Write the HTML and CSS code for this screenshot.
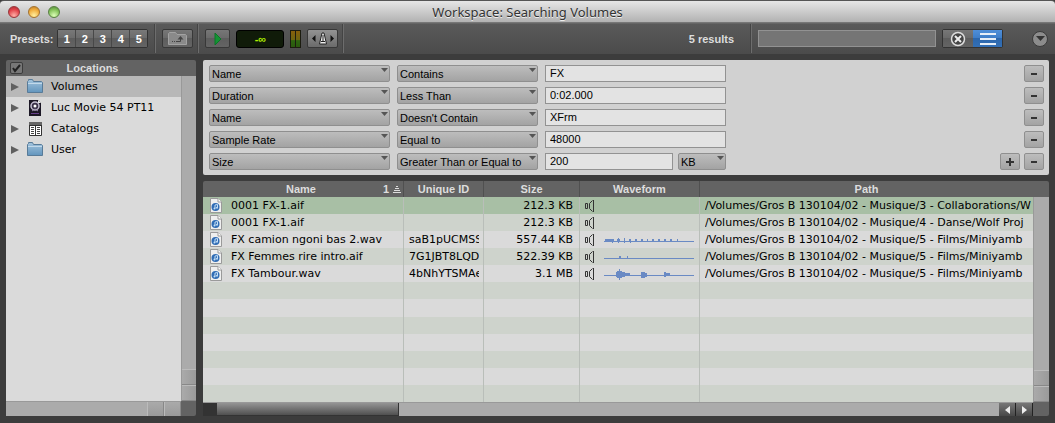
FILE: index.html
```
<!DOCTYPE html>
<html lang="en">
<head>
  <meta charset="UTF-8" />
  <meta name="viewport" content="width=device-width, initial-scale=1" />
  <title>Workspace: Searching Volumes</title>
  <link rel="stylesheet" href="styles.css">
</head>
<body>

  <!-- Shared icons -->
  <svg class="sprite" aria-hidden="true">
    <defs>
      <linearGradient id="folder-fill" x1="0" y1="0" x2="0" y2="1">
        <stop offset="0" stop-color="#a3c4dd" />
        <stop offset="1" stop-color="#6295bd" />
      </linearGradient>
    </defs>
    <symbol id="folder" viewBox="0 0 16 15">
      <path d="M.5 13.500V2.500L1.500 1.500V.5H5.500L6.500 2.500H14.500L15.500 3.500V13.500Z" fill="url(#folder-fill)" stroke="#587b98" />
      <path d="M1 4.500H15" stroke="#c2d9ea" />
    </symbol>
    <symbol id="audio-file" viewBox="0 0 12 15">
      <path d="M.5 .5H8L11.5 4V14.5H.5Z" fill="#efefef" stroke="#9a9a9a" />
      <path d="M8 .5V4H11.5" fill="#fff" stroke="#9a9a9a" />
      <circle cx="5.5" cy="9" r="4" fill="#2f6cb5" />
      <path d="M5 10.5V7L7.5 6.5V9.5" fill="none" stroke="#c4def5" />
      <circle cx="4.5" cy="10.5" r="1" fill="#c4def5" />
      <circle cx="7" cy="9.7" r="1" fill="#c4def5" />
    </symbol>
    <symbol id="speaker" viewBox="0 0 10 14">
      <path d="M.5 4.500H2.500V9.500H.5ZM8.500 1V13M7.500 1.500L4.500 4.500V9.500L7.500 12.500" fill="none" stroke="#333" />
    </symbol>
  </svg>

  <header class="titlebar">
    <div class="lights">
      <button class="light red" aria-label="Close"></button>
      <button class="light yellow" aria-label="Minimize"></button>
      <button class="light green" aria-label="Zoom"></button>
    </div>
    <h1>Workspace: Searching Volumes</h1>
  </header>

  <!-- Toolbar -->
  <div class="toolbar">
    <div class="group presets">
      <span>Presets:</span>
      <div class="preset-buttons">
        <button>1</button><button>2</button><button>3</button><button>4</button><button>5</button>
      </div>
    </div>
    <div class="group">
      <button class="tool wide" aria-label="Up one folder">
        <svg width="19" height="14" viewBox="0 0 19 14">
          <path d="M.5 12.5V1.5L1.5 .5H7.5L9 2.5H17.5L18.5 3.5V12.5Z" fill="#8a8a8a" stroke="#a2a2a2" />
          <path d="M4 9.500H5M6 9.500H7M8 9.500H12.500V6" fill="none" stroke="#444" />
          <path d="M9.500 7.500L12.500 4L15.500 7.500Z" fill="#444" />
        </svg>
      </button>
    </div>
    <div class="group preview">
      <button class="tool" aria-label="Play">
        <svg width="8" height="12" viewBox="0 0 8 12"><path d="M1 0L7 6L1 12Z" fill="#149334" stroke="#0b7627" /></svg>
      </button>
      <output class="level">-∞</output>
      <div class="meter"><i></i><i></i></div>
      <button class="tool wide metronome" aria-label="Metronome">
        <svg width="22" height="13" viewBox="0 0 22 13">
          <path d="M3.500 3V10L0 6.500ZM18.500 3V10L22 6.500Z" fill="#111" />
          <path d="M10 1H12L14.500 12H7.500Z" fill="#eee" stroke="#222" />
          <path d="M11 3V9M9 9.500H13" stroke="#222" />
        </svg>
      </button>
    </div>
    <div class="group results"><span>5 results</span></div>
    <div class="search">
      <input type="text" aria-label="Search">
      <div class="toggle">
        <button aria-label="Cancel search">
          <svg width="16" height="16" viewBox="0 0 16 16">
            <circle cx="8" cy="8" r="6.500" fill="#444" stroke="#ddd" stroke-width="1.500" />
            <path d="M5 5L11 11M11 5L5 11" stroke="#eee" stroke-width="2" />
          </svg>
        </button>
        <button class="on" aria-label="Advanced search">
          <svg width="16" height="12" viewBox="0 0 16 12"><path d="M0 1H16M0 6H16M0 11H16" stroke="#e6eef7" stroke-width="2" /></svg>
        </button>
      </div>
      <button class="menu" aria-label="Workspace menu">
        <svg width="9" height="5" viewBox="0 0 9 5"><path d="M0 0H9L4.500 5Z" fill="#333" /></svg>
      </button>
    </div>
  </div>

  <main>
    <!-- Locations -->
    <aside class="panel locations">
      <div class="locations-head">
        <label class="check"><input type="checkbox" checked aria-label="Select all locations"></label>
        <h2>Locations</h2>
      </div>
      <ul>
        <li class="selected"><i class="expand"></i><svg width="16" height="15"><use href="#folder" /></svg>Volumes</li>
        <li><i class="expand"></i>
          <svg width="16" height="16" viewBox="0 0 16 16">
            <path d="M2 0H11L14 3V16H2Z" fill="#1c1725" />
            <path d="M11 0V3H14Z" fill="#eee" />
            <circle cx="8" cy="6" r="4" fill="#393047" stroke="#c5bfd2" stroke-width="1.500" />
            <circle cx="8" cy="6" r="1.500" fill="#fff" />
            <path d="M5 11L8 9L11 11" fill="none" stroke="#9b8fad" />
            <path d="M4 13.500H12" stroke="#67408a" />
          </svg>Luc Movie 54 PT11</li>
        <li><i class="expand"></i>
          <svg width="16" height="16" viewBox="0 0 16 16">
            <path d="M2.500 1.500H14.500V14.500H2.500Z" fill="#fff" stroke="#333" />
            <path d="M2 1H15V4H2Z" fill="#666" />
            <path d="M2 4.500H15M8.500 4V15" stroke="#333" />
            <path d="M4 6.500H7M4 8.500H7M4 10.500H7M4 12.500H7M10 6.500H13M10 8.500H13M10 10.500H13M10 12.500H13" stroke="#444" />
          </svg>Catalogs</li>
        <li><i class="expand"></i><svg width="16" height="15"><use href="#folder" /></svg>User</li>
      </ul>
      <div class="vscroll"><i></i><i></i></div>
      <div class="hscroll"><i></i><i></i></div>
    </aside>

    <div class="content">
      <!-- Search criteria -->
      <form class="panel criteria">
        <div class="rule">
          <select aria-label="Field 1"><option>Name</option></select>
          <select class="op" aria-label="Condition 1"><option>Contains</option></select>
          <input type="text" value="FX" aria-label="Value 1">
          <div class="actions"><button type="button" class="remove" aria-label="Remove"></button></div>
        </div>
        <div class="rule">
          <select aria-label="Field 2"><option>Duration</option></select>
          <select class="op" aria-label="Condition 2"><option>Less Than</option></select>
          <input type="text" value="0:02.000" aria-label="Value 2">
          <div class="actions"><button type="button" class="remove" aria-label="Remove"></button></div>
        </div>
        <div class="rule">
          <select aria-label="Field 3"><option>Name</option></select>
          <select class="op" aria-label="Condition 3"><option>Doesn't Contain</option></select>
          <input type="text" value="XFrm" aria-label="Value 3">
          <div class="actions"><button type="button" class="remove" aria-label="Remove"></button></div>
        </div>
        <div class="rule">
          <select aria-label="Field 4"><option>Sample Rate</option></select>
          <select class="op" aria-label="Condition 4"><option>Equal to</option></select>
          <input type="text" value="48000" aria-label="Value 4">
          <div class="actions"><button type="button" class="remove" aria-label="Remove"></button></div>
        </div>
        <div class="rule">
          <select aria-label="Field 5"><option>Size</option></select>
          <select class="op" aria-label="Condition 5"><option>Greater Than or Equal to</option></select>
          <div class="with-unit">
            <input type="text" value="200" aria-label="Value 5">
            <select class="unit" aria-label="Unit"><option>KB</option></select>
          </div>
          <div class="actions">
            <button type="button" class="add" aria-label="Add"></button>
            <button type="button" class="remove" aria-label="Remove"></button>
          </div>
        </div>
      </form>

      <!-- Results -->
      <section class="panel files">
        <table>
          <colgroup>
            <col class="c-name"><col class="c-id"><col class="c-size"><col class="c-wave"><col>
          </colgroup>
          <thead>
            <tr>
              <th><div class="sort"><span>Name</span><span>1</span>
                <svg width="8" height="8" viewBox="0 0 8 8"><path d="M3 1.500H5M2 3.500H6M1 5.500H7M0 7.500H8" stroke="#ddd" /></svg></div></th>
              <th>Unique ID</th>
              <th>Size</th>
              <th>Waveform</th>
              <th>Path</th>
            </tr>
          </thead>
          <tbody>
            <tr class="selected">
              <td><div class="file"><svg width="12" height="15"><use href="#audio-file" /></svg>0001 FX-1.aif</div></td>
              <td></td>
              <td class="size">212.3 KB</td>
              <td><div class="wave"><svg width="10" height="14"><use href="#speaker" /></svg></div></td>
              <td><div class="clip">/Volumes/Gros B 130104/02 - Musique/3 - Collaborations/W</div></td>
            </tr>
            <tr>
              <td><div class="file"><svg width="12" height="15"><use href="#audio-file" /></svg>0001 FX-1.aif</div></td>
              <td></td>
              <td class="size">212.3 KB</td>
              <td><div class="wave"><svg width="10" height="14"><use href="#speaker" /></svg></div></td>
              <td><div class="clip">/Volumes/Gros B 130104/02 - Musique/4 - Danse/Wolf Proj</div></td>
            </tr>
            <tr>
              <td><div class="file"><svg width="12" height="15"><use href="#audio-file" /></svg>FX camion ngoni bas 2.wav</div></td>
              <td><div class="clip">saB1pUCMSSj</div></td>
              <td class="size">557.44 KB</td>
              <td><div class="wave"><svg width="10" height="14"><use href="#speaker" /></svg>
                <svg width="90" height="16" viewBox="0 0 90 16" fill="#6a8ac4"><path d="M0 9H90V10H0ZM1 7H10V10H1ZM8 8H9V11H8ZM13 7H16V10H13ZM14 6H15V11H14ZM20 6H21V11H20ZM25 7H27V10H25ZM26 9H27V11H26ZM31 7H33V9H31ZM37 7H39V9H37ZM43 7H44V9H43ZM48 7H50V9H48ZM54 7H56V9H54ZM60 7H62V9H60ZM66 7H68V9H66ZM73 7H74V9H73Z" /></svg></div></td>
              <td><div class="clip">/Volumes/Gros B 130104/02 - Musique/5 - Films/Miniyamb</div></td>
            </tr>
            <tr>
              <td><div class="file"><svg width="12" height="15"><use href="#audio-file" /></svg>FX Femmes rire intro.aif</div></td>
              <td><div class="clip">7G1JBT8LQDI</div></td>
              <td class="size">522.39 KB</td>
              <td><div class="wave"><svg width="10" height="14"><use href="#speaker" /></svg>
                <svg width="90" height="16" viewBox="0 0 90 16" fill="#6a8ac4"><path d="M0 9H90V10H0ZM15 7H17V10H15ZM23 7H24V10H23Z" /></svg></div></td>
              <td><div class="clip">/Volumes/Gros B 130104/02 - Musique/5 - Films/Miniyamb</div></td>
            </tr>
            <tr>
              <td><div class="file"><svg width="12" height="15"><use href="#audio-file" /></svg>FX Tambour.wav</div></td>
              <td><div class="clip">4bNhYTSMAe</div></td>
              <td class="size">3.1 MB</td>
              <td><div class="wave"><svg width="10" height="14"><use href="#speaker" /></svg>
                <svg width="90" height="16" viewBox="0 0 90 16" fill="#6a8ac4"><path d="M0 9H90V10H0ZM12 6H13V11H12ZM13 5H15V12H13ZM15 3H16V14H15ZM16 5H18V12H16ZM18 6H21V11H18ZM21 7H26V10H21ZM37 6H41V12H37ZM41 7H43V11H41ZM60 6H62V11H60ZM62 7H66V10H62Z" /></svg></div></td>
              <td><div class="clip">/Volumes/Gros B 130104/02 - Musique/5 - Films/Miniyamb</div></td>
            </tr>
            <tr><td></td><td></td><td></td><td></td><td></td></tr>
            <tr><td></td><td></td><td></td><td></td><td></td></tr>
            <tr><td></td><td></td><td></td><td></td><td></td></tr>
            <tr><td></td><td></td><td></td><td></td><td></td></tr>
            <tr><td></td><td></td><td></td><td></td><td></td></tr>
            <tr><td></td><td></td><td></td><td></td><td></td></tr>
            <tr><td></td><td></td><td></td><td></td><td></td></tr>
          </tbody>
        </table>
        <div class="vscroll"><i></i><i></i></div>
        <div class="hscroll">
          <span class="corner"></span>
          <span class="thumb"></span>
          <button aria-label="Scroll left"><svg width="5" height="8" viewBox="0 0 5 8"><path d="M5 0V8L0 4Z" fill="#eee" /></svg></button>
          <button aria-label="Scroll right"><svg width="5" height="8" viewBox="0 0 5 8"><path d="M0 0V8L5 4Z" fill="#eee" /></svg></button>
        </div>
      </section>
    </div>
  </main>

</body>
</html>
```
FILE: styles.css
```
:root {
  --frame: #3c3c3c;
  --bar: #636363;
  --pane: #dadada;
  --track: #ababab;
  --ui: "Liberation Sans", Arial, sans-serif;
  --list: "DejaVu Sans", "Lucida Grande", sans-serif;
}

* {
  box-sizing: border-box;
}

body {
  margin: 0;
  min-height: 100vh;
  display: flex;
  flex-direction: column;
  background: var(--frame);
  font-family: var(--ui);
  font-size: 11px;
  color: #000;
}

button, input, select {
  font: inherit;
  margin: 0;
  padding: 0;
  border: 0;
}

button {
  display: flex;
  align-items: center;
  justify-content: center;
}

h1, h2, ul {
  margin: 0;
  padding: 0;
  list-style: none;
}

svg {
  flex: none;
  display: block;
}

.sprite {
  position: absolute;
  width: 0;
  height: 0;
}

/* Title bar */
.titlebar {
  display: grid;
  grid-template-columns: 1fr auto 1fr;
  align-items: center;
  height: 23px;
  padding: 1px 8px 0;
  background: linear-gradient(#e6e6e6, #b2b2b2);
  border-top: 1px solid #555;
  border-bottom: 1px solid #777;
  border-radius: 4px 4px 0 0;
}

.titlebar h1 {
  font: 13px/20px "Noto Sans", sans-serif;
  color: #333;
  text-shadow: 0 1px 0 #eee;
}

.lights {
  display: flex;
  gap: 8px;
}

.light {
  width: 12px;
  height: 12px;
  border-radius: 50%;
}

.red {
  background: radial-gradient(circle at 50% 85%, #ffb0a8, #e2434a 60%, #a52a30);
  border: 1px solid #97363a;
}

.yellow {
  background: radial-gradient(circle at 50% 85%, #fff0a0, #f0ac3c 60%, #b87a24);
  border: 1px solid #a3712e;
}

.green {
  background: radial-gradient(circle at 50% 85%, #dcffb8, #84c259 60%, #52863a);
  border: 1px solid #587f43;
}

/* Toolbar */
.toolbar {
  display: flex;
  height: 31px;
  padding-bottom: 1px;
  background: linear-gradient(#5a5a5a, #4b4b4b);
  border-top: 1px solid #666;
  color: #ddd;
  font-weight: bold;
}

.group {
  display: flex;
  align-items: center;
  gap: 6px;
  padding: 0 5px 0 6px;
  border-right: 1px solid #6d6d6d;
  box-shadow: inset -1px 0 #444;
}

.presets {
  gap: 4px;
  padding: 0 7px 0 10px;
}

.preset-buttons, .toggle {
  display: flex;
  border: 1px solid #333;
  border-radius: 2px;
}

.preset-buttons button {
  width: 18px;
  height: 17px;
  background: linear-gradient(#787878, #6b6b6b 50%, #5d5d5d 50%, #646464);
  color: #fff;
  border-right: 1px solid #484848;
}

.preset-buttons button:last-child {
  width: 17px;
  border-right: 0;
}

.tool {
  width: 25px;
  height: 19px;
  background: linear-gradient(#777, #696969 50%, #5d5d5d 50%, #646464);
  border: 1px solid #383838;
  border-radius: 2px;
}

.wide {
  width: 31px;
}

.metronome {
  background: linear-gradient(#939393, #6b6b6b);
}

.level {
  width: 48px;
  height: 18px;
  line-height: 16px;
  text-align: center;
  color: #aef000;
  background: #101b09;
  border: 1px solid #000;
  border-radius: 3px;
}

.meter {
  display: flex;
  gap: 1px;
  padding: 1px;
  background: #1c1c10;
}

.meter i {
  width: 4px;
  height: 16px;
  background: linear-gradient(#875f0c, #6d6410 55%, #2d6410 60%, #2b5a0e);
}

.results {
  flex: 1;
  justify-content: flex-end;
  padding-right: 17px;
}

.search {
  display: flex;
  align-items: center;
  gap: 6px;
  padding: 0 7px 0 6px;
}

.search input {
  width: 178px;
  height: 17px;
  padding: 0 4px;
  background: #757575;
  border: 1px solid #929292;
  color: #fff;
}

.toggle {
  margin-right: 23px;
}

.toggle button {
  width: 30px;
  height: 17px;
  background: linear-gradient(#777, #696969 50%, #5d5d5d 50%, #646464);
}

.toggle .on {
  width: 29px;
  background: linear-gradient(#4f8fd9, #3d7cc6 50%, #2c67ad 50%, #336fb5);
}

.menu {
  width: 16px;
  height: 16px;
  background: #8c8c8c;
  border: 1px solid #3a3a3a;
  border-radius: 50%;
}

/* Main area */
main {
  flex: 1;
  display: flex;
  gap: 7px;
  padding: 6px 6px 7px 6px;
}

.content {
  flex: 1;
  min-width: 0;
  display: flex;
  flex-direction: column;
  gap: 6px;
}

.panel {
  background: var(--pane);
  border-radius: 2px;
}

/* Locations */
.locations {
  width: 190px;
  display: grid;
  grid-template: 16px 1fr 15px / 1fr 15px;
  background: var(--bar);
}

.locations-head {
  grid-column: 1 / 3;
  display: flex;
  align-items: center;
  padding: 0 34px 0 4px;
  color: #ddd;
}

.locations-head h2 {
  flex: 1;
  text-align: center;
  font-size: 11px;
}

.check {
  display: flex;
}

.check input {
  appearance: none;
  width: 13px;
  height: 12px;
  border: 1px solid #3c3c3c;
  border-radius: 2px;
  background: #777 url("data:image/svg+xml,%3Csvg xmlns='http://www.w3.org/2000/svg' viewBox='0 0 11 10'%3E%3Cpath d='M2 5L4 8L9 2' fill='none' stroke='%23222' stroke-width='2'/%3E%3C/svg%3E") center / 11px 10px no-repeat;
}

.locations ul {
  background: var(--pane);
}

.locations li {
  display: flex;
  align-items: center;
  gap: 8px;
  height: 21px;
  padding-left: 5px;
  font: 11px/21px var(--list);
}

.locations li.selected {
  background: #b8b8b8;
}

.expand {
  border: solid transparent;
  border-width: 4px 0 4px 8px;
  border-left-color: #606060;
}

/* Scroll bars */
.vscroll {
  display: flex;
  flex-direction: column;
  justify-content: flex-end;
  background: var(--track);
  border-left: 1px solid #999;
}

.vscroll i {
  height: 16px;
  background: linear-gradient(90deg, #aaa, #9a9a9a);
  border-top: 1px solid #bbb;
  border-bottom: 1px solid #888;
}

.hscroll {
  display: flex;
  justify-content: flex-end;
  background: var(--track);
  border-top: 1px solid #999;
}

.hscroll i {
  width: 17px;
  background: linear-gradient(#aaa, #9a9a9a);
  border-left: 1px solid #bbb;
  border-right: 1px solid #888;
}

.hscroll button {
  width: 17px;
  background: linear-gradient(#777, #484848);
  border-right: 1px solid #222;
}

.hscroll .corner {
  width: 14px;
  background: #333;
}

.hscroll .thumb {
  width: 182px;
  margin-right: auto;
  background: linear-gradient(#949494, #505050);
  border: 1px solid #333;
  border-width: 0 1px 1px 0;
}

/* Search criteria */
.criteria {
  display: flex;
  flex-direction: column;
  gap: 5px;
  padding: 5px 5px 5px 6px;
  background: #d1d1d1;
}

.rule {
  display: flex;
  gap: 7px;
  height: 17px;
}

.criteria select {
  appearance: none;
  width: 181px;
  height: 17px;
  padding: 1px 3px 0 2px;
  color: #000;
  background: url("data:image/svg+xml,%3Csvg xmlns='http://www.w3.org/2000/svg' viewBox='0 0 7 4'%3E%3Cpath d='M0 0H7L3.500 4Z' fill='%23555'/%3E%3C/svg%3E") right 1px top 2px / 7px 4px no-repeat, linear-gradient(#bdbdbd, #a3a3a3);
  border: 1px solid #8f8f8f;
  border-radius: 2px;
}

.criteria .op {
  width: 141px;
}

.criteria input {
  width: 181px;
  height: 17px;
  padding: 0 4px 1px;
  background: #e3e3e3;
  border: 1px solid #929292;
}

.with-unit {
  display: flex;
  gap: 5px;
  width: 181px;
}

.with-unit input {
  flex: 1;
  min-width: 0;
}

.criteria .unit {
  width: 48px;
}

.actions {
  display: flex;
  gap: 4px;
  margin-left: auto;
}

.actions button {
  width: 20px;
  height: 17px;
  border: 1px solid #8f8f8f;
  border-radius: 2px;
}

.remove {
  background: linear-gradient(#333, #333) center / 6px 2px no-repeat, linear-gradient(#bdbdbd, #a3a3a3);
}

.add {
  background: linear-gradient(#333, #333) center / 8px 2px no-repeat, linear-gradient(#333, #333) center / 2px 8px no-repeat, linear-gradient(#bdbdbd, #a3a3a3);
}

/* Results */
.files {
  flex: 1;
  display: grid;
  grid-template: 16px 1fr 14px / 1fr 16px;
  background: var(--bar);
}

.files table {
  grid-area: 1 / 1 / 3 / 2;
  width: 100%;
  table-layout: fixed;
  border-collapse: separate;
  border-spacing: 0;
}

.files .vscroll {
  grid-area: 2 / 2;
}

.files .hscroll {
  grid-area: 3 / 1;
}

.c-name { width: 201px; }
.c-id { width: 80px; }
.c-size { width: 96px; }
.c-wave { width: 120px; }

th {
  height: 16px;
  padding: 0;
  color: #ddd;
  border-right: 1px solid #505050;
}

.sort {
  display: flex;
  align-items: center;
  gap: 4px;
  padding-right: 2px;
}

.sort span:first-child {
  flex: 1;
  padding-left: 20px;
}

td {
  height: 17px;
  padding: 0 4px 0 5px;
  font: 11px/17px var(--list);
  white-space: nowrap;
  border-right: 1px solid #b9beb9;
}

th:last-child, td:last-child {
  border-right: 0;
}

tbody tr {
  background: var(--pane);
}

tbody tr:nth-child(even) {
  background: #ced3cc;
}

tbody tr.selected {
  background: #a8bfa5;
}

.file {
  display: flex;
  align-items: center;
  gap: 9px;
  padding-left: 2px;
}

.clip {
  overflow: hidden;
}

.size {
  text-align: right;
  padding-right: 6px;
}

.wave {
  display: flex;
  align-items: center;
  gap: 9px;
}

td:last-child {
  padding: 0 2px 0 5px;
}
```
